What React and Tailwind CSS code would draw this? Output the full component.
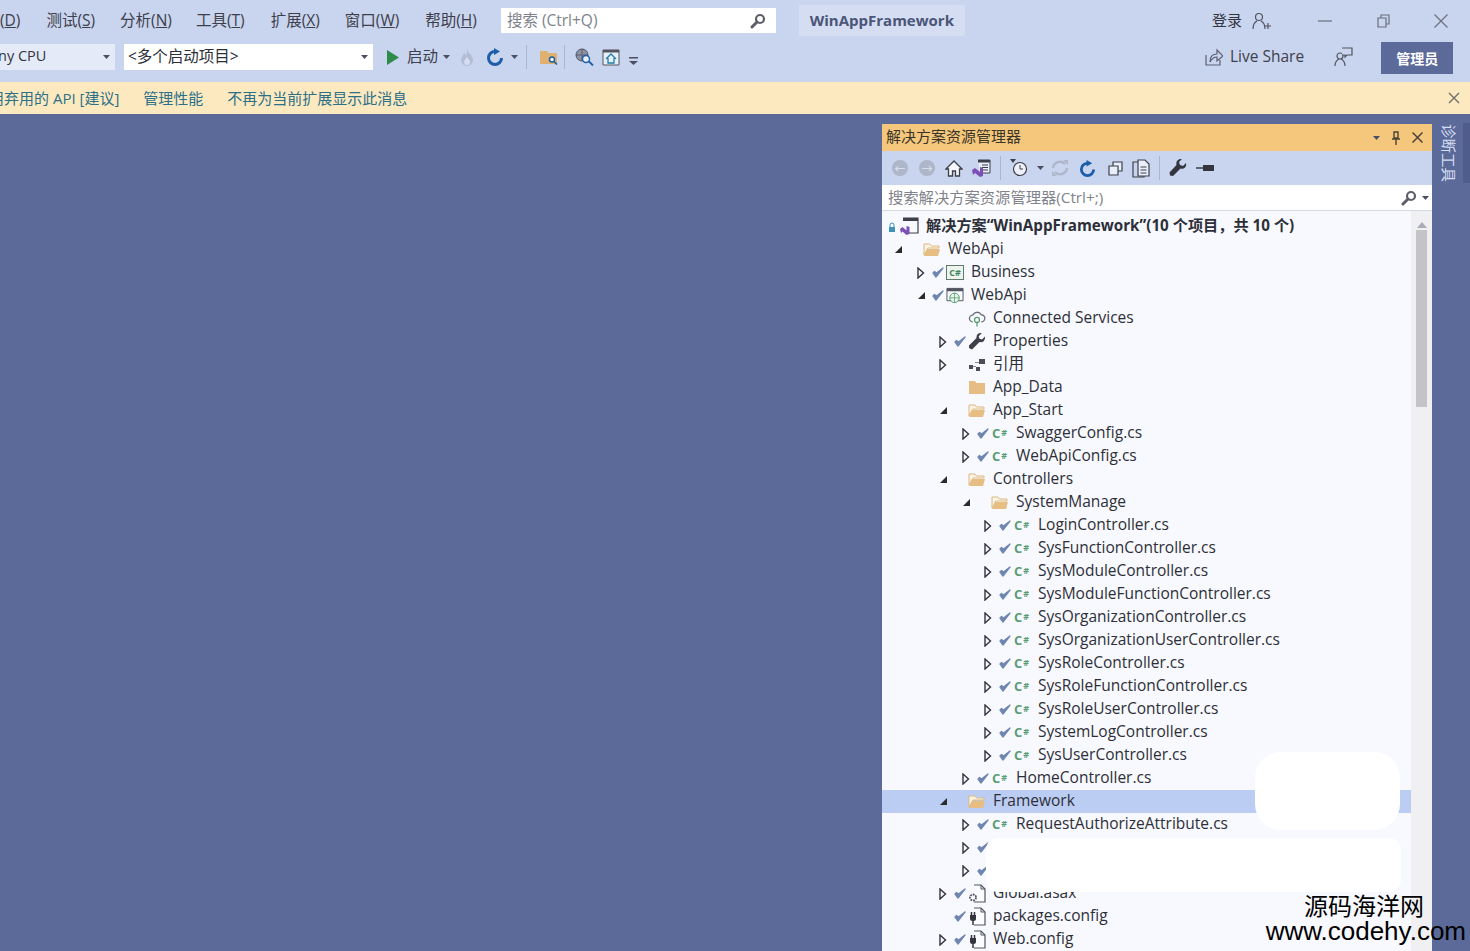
import React from "react";

const font = "font-['Open_Sans','Noto_Sans_CJK_SC',sans-serif]";

const levelPad = {
  1: "pl-[8px]",
  2: "pl-[31px]",
  3: "pl-[53px]",
  4: "pl-[76px]",
  5: "pl-[98px]",
};

const rows = [
  { level: 1, arrow: "open", icon: "folderOpen", label: "WebApi", noCheck: true },
  { level: 2, arrow: "closed", check: true, icon: "csproj", label: "Business" },
  { level: 2, arrow: "open", check: true, icon: "webproj", label: "WebApi" },
  { level: 3, icon: "cloud", label: "Connected Services" },
  { level: 3, arrow: "closed", check: true, icon: "wrench", label: "Properties" },
  { level: 3, arrow: "closed", icon: "refs", label: "引用" },
  { level: 3, icon: "folder", label: "App_Data" },
  { level: 3, arrow: "open", icon: "folderOpen", label: "App_Start" },
  { level: 4, arrow: "closed", check: true, icon: "cs", label: "SwaggerConfig.cs" },
  { level: 4, arrow: "closed", check: true, icon: "cs", label: "WebApiConfig.cs" },
  { level: 3, arrow: "open", icon: "folderOpen", label: "Controllers" },
  { level: 4, arrow: "open", icon: "folderOpen", label: "SystemManage" },
  { level: 5, arrow: "closed", check: true, icon: "cs", label: "LoginController.cs" },
  { level: 5, arrow: "closed", check: true, icon: "cs", label: "SysFunctionController.cs" },
  { level: 5, arrow: "closed", check: true, icon: "cs", label: "SysModuleController.cs" },
  { level: 5, arrow: "closed", check: true, icon: "cs", label: "SysModuleFunctionController.cs" },
  { level: 5, arrow: "closed", check: true, icon: "cs", label: "SysOrganizationController.cs" },
  { level: 5, arrow: "closed", check: true, icon: "cs", label: "SysOrganizationUserController.cs" },
  { level: 5, arrow: "closed", check: true, icon: "cs", label: "SysRoleController.cs" },
  { level: 5, arrow: "closed", check: true, icon: "cs", label: "SysRoleFunctionController.cs" },
  { level: 5, arrow: "closed", check: true, icon: "cs", label: "SysRoleUserController.cs" },
  { level: 5, arrow: "closed", check: true, icon: "cs", label: "SystemLogController.cs" },
  { level: 5, arrow: "closed", check: true, icon: "cs", label: "SysUserController.cs" },
  { level: 4, arrow: "closed", check: true, icon: "cs", label: "HomeController.cs" },
  { level: 3, arrow: "open", icon: "folderOpen", label: "Framework", selected: true },
  { level: 4, arrow: "closed", check: true, icon: "cs", label: "RequestAuthorizeAttribute.cs" },
  { level: 4, arrow: "closed", check: true, icon: "cs", label: "" },
  { level: 4, arrow: "closed", check: true, icon: "cs", label: "" },
  { level: 3, arrow: "closed", check: true, icon: "asax", label: "Global.asax" },
  { level: 3, check: true, icon: "config", label: "packages.config" },
  { level: 3, arrow: "closed", check: true, icon: "config", label: "Web.config" },
];

function Caret({ className = "" }) {
  return (
    <svg width="7" height="4" viewBox="0 0 7 4" className={className}>
      <path d="M0 0h7L3.5 4z" fill="#4a4f63" />
    </svg>
  );
}

function Arrow({ type }) {
  if (type === "open") {
    return (
      <svg width="9" height="9" viewBox="0 0 9 9">
        <path d="M8 1v7H1z" fill="#2b2b2b" />
      </svg>
    );
  }
  if (type === "closed") {
    return (
      <svg width="8" height="12" viewBox="0 0 8 12">
        <path d="M1 1l5.5 5L1 11z" fill="none" stroke="#33343c" strokeWidth="1.4" />
      </svg>
    );
  }
  return null;
}

function Check() {
  return (
    <svg width="12" height="11" viewBox="0 0 12 11">
      <path d="M1 6l3 4L11 1 4.500 6 2.500 4.500z" fill="#6f86b0" stroke="#6f86b0" strokeWidth="1.300" strokeLinejoin="round" />
    </svg>
  );
}

function DocIcon({ children }) {
  return (
    <svg width="18" height="19" viewBox="0 0 18 19">
      <path d="M6 1h7l4 4v13H6" fill="#fbfcff" stroke="#50545f" strokeWidth="1.200" />
      <path d="M13 1v4h4" fill="none" stroke="#50545f" />
      {children}
    </svg>
  );
}

function TreeIcon({ name }) {
  if (name === "folderOpen") {
    return (
      <svg width="18" height="15" viewBox="0 0 18 15">
        <path d="M1 2h6l1.5 2H16v2H5L1 13z" fill="#fbf3e4" stroke="#dcb983" />
        <path d="M1 14l3-7h13l-2 7z" fill="#e6bd82" />
      </svg>
    );
  }
  if (name === "folder") {
    return (
      <svg width="18" height="15" viewBox="0 0 18 15">
        <path d="M1 1h6l1.5 2H17v11H1z" fill="#e6bd82" />
      </svg>
    );
  }
  if (name === "cs") {
    return (
      <span className="flex w-full justify-start pl-[1px] text-[13px] leading-none font-bold text-[#5a9c74]">
        C<span className="ml-[1px] text-[9px] leading-[11px] font-bold">#</span>
      </span>
    );
  }
  if (name === "csproj") {
    return (
      <span className="flex h-[15px] w-[18px] items-center justify-center border border-[#5f7b6c] bg-[#eef3ee] text-[9px] leading-none font-bold text-[#3f8a60]">
        C#
      </span>
    );
  }
  if (name === "webproj") {
    return (
      <svg width="19" height="17" viewBox="0 0 19 17">
        <path d="M1 1h17v13H1z" fill="#f7f8fc" stroke="#50545f" />
        <path d="M1 1h17v3H1z" fill="#50545f" />
        <circle cx="9" cy="11" r="5" fill="#e8f4ea" stroke="#4f9a6c" />
        <path d="M4 11h10M9 6v10" stroke="#4f9a6c" strokeWidth="0.8" />
      </svg>
    );
  }
  if (name === "cloud") {
    return (
      <svg width="19" height="16" viewBox="0 0 19 16">
        <path d="M5 11a3.5 3.5 0 010-7 5 5 0 019-.5 3.7 3.7 0 010 7.5" fill="none" stroke="#6b7078" strokeWidth="1.4" />
        <circle cx="9.5" cy="9" r="2.6" fill="#fff" stroke="#4f9a6c" strokeWidth="1.3" />
        <path d="M9.5 11.5V16" stroke="#4f9a6c" strokeWidth="1.3" />
      </svg>
    );
  }
  if (name === "wrench") {
    return (
      <svg width="18" height="17" viewBox="0 0 18 17">
        <path d="M17 3.5l-3 3-2.500-.8-.8-2.500 3-3C11 -.5 8 1.500 8.500 5L1 12.500 1 15l3 1.500 7.500-7.500C15 9.800 17.500 7 17 3.500z" fill="#3d4048" />
      </svg>
    );
  }
  if (name === "refs") {
    return (
      <svg width="18" height="14" viewBox="0 0 18 14">
        <path d="M11 1h6v5h-6zM1 7h4v4H1zM8 9h4v4H8z" fill="#4a4d57" />
        <path d="M7 4h4v1H7zM5 8h3v1H5z" fill="#8a8d96" />
      </svg>
    );
  }
  if (name === "asax") {
    return (
      <DocIcon>
        <circle cx="5" cy="13.500" r="3" fill="#fbfcff" stroke="#50545f" strokeWidth="1.800" strokeDasharray="1.800 0.900" />
      </DocIcon>
    );
  }
  if (name === "config") {
    return (
      <DocIcon>
        <path d="M2 8v3.500a2.500 2.500 0 002.500 2.500h1a2.500 2.500 0 002.500-2.500V8z" fill="#33353f" />
        <path d="M3.500 8V5M6.500 8V5M5 14v4" stroke="#33353f" strokeWidth="1.500" />
      </DocIcon>
    );
  }
  return null;
}

function TreeRow({ row }) {
  return (
    <div
      className={`flex h-[23px] shrink-0 items-center ${levelPad[row.level]} ${
        row.selected ? "bg-[#bccdf3]" : ""
      }`}
    >
      <span className="flex w-[16px] shrink-0 items-center justify-center">
        <Arrow type={row.arrow} />
      </span>
      <span className="flex w-[17px] shrink-0 items-center justify-center">
        {row.check && <Check />}
      </span>
      <span className="flex w-[18px] shrink-0 items-center justify-center">
        <TreeIcon name={row.icon} />
      </span>
      <span className="-mt-[2px] ml-[7px] text-[15.500px] leading-[23px] whitespace-nowrap text-[#2d2f38]">
        {row.label}
      </span>
    </div>
  );
}

function MenuItem({ label, hot, className = "" }) {
  return (
    <span className={`text-[15.500px] whitespace-nowrap text-[#3d404c] ${className}`}>
      {label}(<span className="underline">{hot}</span>)
    </span>
  );
}

function SearchGlass({ color = "#5c5f69" }) {
  return (
    <svg width="16" height="16" viewBox="0 0 16 16">
      <circle cx="10" cy="6" r="4" fill="none" stroke={color} strokeWidth="2.2" />
      <path d="M7 9l-5 5" stroke={color} strokeWidth="3" strokeLinecap="round" />
    </svg>
  );
}

function Refresh({ size = 18 }) {
  return (
    <svg width={size} height={size} viewBox="0 0 18 18">
      <path d="M9 3.500A6.500 6.500 0 1 0 15.500 10" fill="none" stroke="#1c5fa8" strokeWidth="3" />
      <path d="M8 0v7l6-3.500z" fill="#1c5fa8" />
    </svg>
  );
}

function TopBar() {
  return (
    <div className="h-[82px] shrink-0 bg-[#c9d4ee]">
      <div className="flex h-[41px] items-center">
        <MenuItem label="" hot="D" />
        <MenuItem label="测试" hot="S" className="ml-[26px]" />
        <MenuItem label="分析" hot="N" className="ml-[25px]" />
        <MenuItem label="工具" hot="T" className="ml-[24px]" />
        <MenuItem label="扩展" hot="X" className="ml-[26px]" />
        <MenuItem label="窗口" hot="W" className="ml-[25px]" />
        <MenuItem label="帮助" hot="H" className="ml-[26px]" />
        <div className="ml-[24px] flex h-[25px] w-[275px] items-center justify-between bg-white pr-[10px] pl-[6px]">
          <span className="text-[15.500px] text-[#80838c]">搜索 (Ctrl+Q)</span>
          <SearchGlass />
        </div>
        <div className="ml-[23px] flex h-[31px] w-[166px] items-center justify-center bg-[#d5ddf3] text-[15px] font-bold text-[#4a5578]">
          WinAppFramework
        </div>
        <span className="ml-[247px] text-[15px] text-[#33353f]">登录</span>
        <svg width="20" height="20" viewBox="0 0 20 20" className="ml-[9px]">
          <circle cx="8" cy="6" r="3.500" fill="none" stroke="#50545f" strokeWidth="1.2" />
          <path d="M2 18c0-5 2-7 4-8M14 18c0-4-2-7-4-8M14 15h6M17 12v6" fill="none" stroke="#50545f" strokeWidth="1.2" />
        </svg>
        <svg width="14" height="2" viewBox="0 0 14 2" className="ml-[47px]">
          <path d="M0 1h14" stroke="#6b6f7b" strokeWidth="1.2" />
        </svg>
        <svg width="13" height="14" viewBox="0 0 13 14" className="ml-[45px]">
          <path d="M1 4h8v9H1zM4 4V1h8v9H9" fill="none" stroke="#6b6f7b" strokeWidth="1.2" />
        </svg>
        <svg width="14" height="14" viewBox="0 0 14 14" className="ml-[44px]">
          <path d="M0.500 0.500l13 13M13.500 0.500l-13 13" stroke="#6b6f7b" strokeWidth="1.2" />
        </svg>
      </div>
      <div className="flex h-[32px] items-center">
        <div className="flex h-[26px] w-[115px] items-center justify-between bg-[#e4eaf8] pr-[5px] pl-0">
          <span className="-mt-[2px] -ml-[2px] text-[14.500px] whitespace-nowrap text-[#33353f]">ny CPU</span>
          <Caret />
        </div>
        <div className="ml-[9px] flex h-[26px] w-[249px] items-center justify-between bg-white pr-[5px] pl-[4px]">
          <span className="text-[15.500px] text-[#2d2f38]">&lt;多个启动项目&gt;</span>
          <Caret />
        </div>
        <svg width="12" height="15" viewBox="0 0 12 15" className="ml-[14px]">
          <path d="M0 0l12 7.500L0 15z" fill="#2e8b4a" />
        </svg>
        <span className="ml-[8px] text-[15.500px] text-[#3d404c]">启动</span>
        <Caret className="ml-[5px]" />
        <svg width="14" height="18" viewBox="0 0 14 18" className="ml-[10px]">
          <path d="M7 1c1 4 6 6 6 11a6 6 0 01-12 0c0-3 2-4 3-7 1 1 2 2 2 3 1-2 1-5 1-7z" fill="#b4bdd6" />
          <path d="M7 9c1 2 3 3 3 5a3 3 0 01-6 0c0-2 2-3 3-5z" fill="#d5ddf3" />
        </svg>
        <span className="ml-[12px]">
          <Refresh />
        </span>
        <Caret className="ml-[7px]" />
        <span className="ml-[8px] h-[24px] w-px bg-[#aab4cf]" />
        <svg width="19" height="15" viewBox="0 0 19 15" className="ml-[12px]">
          <path d="M1 1h7l1.500 2H18v11H1z" fill="#e0b070" />
          <circle cx="13" cy="9.500" r="2.500" fill="#fff" stroke="#1c5fa8" strokeWidth="1.400" />
          <path d="M15 11.500l3 3" stroke="#1c5fa8" strokeWidth="1.600" />
        </svg>
        <span className="ml-[6px] h-[24px] w-px bg-[#aab4cf]" />
        <svg width="20" height="18" viewBox="0 0 20 18" className="ml-[9px]">
          <circle cx="8" cy="7" r="6" fill="#8b93a8" stroke="#50545f" />
          <path d="M2 7h12M8 1v12" stroke="#50545f" strokeWidth="0.800" />
          <circle cx="12" cy="11" r="3.500" fill="#e8eefa" stroke="#1c5fa8" strokeWidth="1.400" />
          <path d="M15 13.500l4 4" stroke="#1c5fa8" strokeWidth="1.800" />
        </svg>
        <svg width="18" height="17" viewBox="0 0 18 17" className="ml-[8px]">
          <path d="M1 1h16v15H1z" fill="#e8eefa" stroke="#50545f" />
          <path d="M1 1h16v2.500H1z" fill="#50545f" />
          <path d="M4 10l5-5 5 5M6 9v5h6V9" fill="none" stroke="#1c7fa8" strokeWidth="1.300" />
        </svg>
        <svg width="9" height="8" viewBox="0 0 9 8" className="mt-[8px] ml-[9px]">
          <path d="M0 0h9v1.400H0zM0 4h9L4.500 8z" fill="#4a4f63" />
        </svg>
        <svg width="18" height="18" viewBox="0 0 18 18" className="ml-[567px]">
          <path d="M1 7v10h14v-5" fill="none" stroke="#5c6070" strokeWidth="1.200" />
          <path d="M5 14c0-6 3-8 7-8V2l6 6-6 5V9c-3 0-5 1-7 5z" fill="none" stroke="#5c6070" strokeWidth="1.200" />
        </svg>
        <span className="ml-[7px] text-[15.500px] whitespace-nowrap text-[#3d404c]">Live Share</span>
        <svg width="19" height="20" viewBox="0 0 19 20" className="ml-[30px]">
          <circle cx="6" cy="9" r="3" fill="none" stroke="#50545f" strokeWidth="1.200" />
          <path d="M1 19c0-4 2-6 4-7M11 19c0-4-2-6-4-7" fill="none" stroke="#50545f" strokeWidth="1.200" />
          <path d="M8 1h10v7h-5l-2 2V8H8" fill="#c9d4ee" stroke="#50545f" strokeWidth="1.200" />
        </svg>
        <div className="mt-[2px] ml-[28px] flex h-[32px] w-[72px] items-center justify-center bg-[#5b6a98] text-[14px] font-bold text-white">
          管理员
        </div>
      </div>
    </div>
  );
}

function Notice() {
  return (
    <div className="flex h-[32px] shrink-0 items-center bg-[#fde9c0] text-[15px] whitespace-nowrap text-[#2b7089]">
      <span className="-ml-[26px]">调用弃用的 API [建议]</span>
      <span className="ml-[24px]">管理性能</span>
      <span className="ml-[24px]">不再为当前扩展显示此消息</span>
      <svg width="12" height="12" viewBox="0 0 12 12" className="mr-[10px] ml-auto">
        <path d="M1 1l10 10M11 1L1 11" stroke="#6f6f68" strokeWidth="1.400" />
      </svg>
    </div>
  );
}

function PanelToolbar() {
  return (
    <div className="flex h-[34px] shrink-0 items-center bg-[#c9d4ee] pl-[10px]">
      <span className="flex h-[16px] w-[16px] items-center justify-center rounded-full bg-[#aeb6c9] text-[11px] leading-none text-[#dfe5f3]">←</span>
      <span className="ml-[11px] flex h-[16px] w-[16px] items-center justify-center rounded-full bg-[#aeb6c9] text-[11px] leading-none text-[#dfe5f3]">→</span>
      <svg width="18" height="17" viewBox="0 0 18 17" className="ml-[10px]">
        <path d="M9 1L1 9h2.500v7h4v-5h3v5h4V9H17z" fill="#f5f7fc" stroke="#3d4048" strokeWidth="1.300" />
      </svg>
      <svg width="19" height="18" viewBox="0 0 19 18" className="ml-[9px]">
        <path d="M6 1h12v13H8" fill="#e8eefa" stroke="#3d4048" />
        <path d="M6 1h12v2.500H6z" fill="#3d4048" />
        <path d="M10 6h6M10 8.500h6M10 11h6" stroke="#3d4048" />
        <path d="M0 11l3-2 5 4V8l3 1v8l-3 1-5-4-2 2z" fill="#7b4fb5" />
      </svg>
      <span className="ml-[9px] h-[24px] w-px bg-[#aab4cf]" />
      <svg width="19" height="20" viewBox="0 0 19 20" className="ml-[9px]">
        <path d="M0 1h6L3 5z" fill="#3d4048" />
        <circle cx="10" cy="11" r="6.500" fill="#eef1f9" stroke="#3d4048" strokeWidth="1.200" />
        <path d="M10 7v4h3" fill="none" stroke="#3d4048" />
      </svg>
      <Caret className="ml-[8px]" />
      <svg width="18" height="18" viewBox="0 0 18 18" className="ml-[7px]">
        <path d="M2 9a7 7 0 0112-4M16 9a7 7 0 01-12 4" fill="none" stroke="#aeb6c9" strokeWidth="2.400" />
        <path d="M12 1h5v5zM6 17H1v-5z" fill="#aeb6c9" />
      </svg>
      <span className="ml-[10px]">
        <Refresh size={17} />
      </span>
      <svg width="15" height="15" viewBox="0 0 15 15" className="ml-[12px]">
        <path d="M1 5h9v9H1zM5 5V1h9v9h-4" fill="#e8eefa" stroke="#3d4048" strokeWidth="1.200" />
      </svg>
      <svg width="18" height="19" viewBox="0 0 18 19" className="ml-[9px]">
        <path d="M1 3h11v15H1z" fill="none" stroke="#3d4048" strokeWidth="1.200" />
        <path d="M6 1h7l4 4v12H6z" fill="#e8eefa" stroke="#3d4048" strokeWidth="1.200" />
        <path d="M8.500 8h6M8.500 11h6M8.500 14h6" stroke="#3d4048" />
      </svg>
      <span className="ml-[9px] h-[24px] w-px bg-[#aab4cf]" />
      <svg width="18" height="18" viewBox="0 0 18 18" className="ml-[9px]">
        <path d="M17 4l-3 3-3-1-1-3 3-3C9.500 -.5 6.500 2 7.500 6L.5 13.500 1 16.500 4 17l7.500-7.500C15 10.500 18 8 17 4z" fill="#33353f" />
      </svg>
      <svg width="18" height="6" viewBox="0 0 18 6" className="ml-[9px]">
        <path d="M0 3h7" stroke="#33353f" strokeWidth="1.400" />
        <path d="M7 0h11v6H7z" fill="#33353f" />
      </svg>
    </div>
  );
}

function SolutionExplorer() {
  return (
    <div className="flex h-[827px] w-[550px] shrink-0 flex-col overflow-hidden">
      <div className="flex h-[27px] shrink-0 items-center bg-[#f4c77d] pr-[9px] pl-[4px]">
        <span className="-mt-[2px] text-[15px] text-[#3a3528]">解决方案资源管理器</span>
        <Caret className="ml-auto" />
        <svg width="10" height="14" viewBox="0 0 10 14" className="ml-[11px]">
          <path d="M3 1h4v6H3zM1 8h8M5 8v6" fill="none" stroke="#4a4336" strokeWidth="1.400" />
        </svg>
        <svg width="11" height="11" viewBox="0 0 11 11" className="ml-[11px]">
          <path d="M.5.5l10 10M10.500.5l-10 10" stroke="#4a4336" strokeWidth="1.500" />
        </svg>
      </div>
      <PanelToolbar />
      <div className="flex h-[26px] shrink-0 items-center justify-between border-b border-[#d5d9e4] bg-white pr-[3px] pl-[6px]">
        <span className="text-[15.300px] text-[#80838c]">搜索解决方案资源管理器(Ctrl+;)</span>
        <span className="flex items-center gap-[5px]">
          <SearchGlass />
          <Caret />
        </span>
      </div>
      <div className="flex min-h-0 flex-1">
        <div className="relative min-w-0 flex-1 overflow-hidden bg-[#f8f9fe] pt-[4px]">
          <div className="flex h-[23px] items-center pl-[6px]">
            <svg width="8" height="10" viewBox="0 0 8 10">
              <path d="M2 5V3a2 2 0 014 0v2" fill="none" stroke="#3f93b5" />
              <path d="M1 5h6v5H1z" fill="#3f93b5" />
            </svg>
            <svg width="19" height="19" viewBox="0 0 19 19" className="ml-[4px]">
              <path d="M3 1h15v15H8" fill="#f8f9fe" stroke="#3d4048" strokeWidth="1.200" />
              <path d="M3 1h15v3H3z" fill="#3d4048" />
              <path d="M0 12l2.500-2 4 3.500V9l3 1v7l-3 1-4-3.500L1 16z" fill="#7b4fb5" />
            </svg>
            <span className="-mt-[2px] ml-[7px] text-[15.200px] font-bold whitespace-nowrap text-[#2d2f38]">
              解决方案“WinAppFramework”(10 个项目，共 10 个)
            </span>
          </div>
          {rows.map((row, i) => (
            <TreeRow key={i} row={row} />
          ))}
          <div className="absolute top-[541px] left-[373px] h-[78px] w-[145px] rounded-[26px] bg-white" />
          <div className="absolute top-[627px] left-[104px] h-[54px] w-[415px] rounded-[12px] bg-white" />
        </div>
        <div className="flex w-[21px] shrink-0 flex-col items-center bg-[#f0f0f3] pt-[11px]">
          <svg width="10" height="6" viewBox="0 0 10 6">
            <path d="M5 0l5 6H0z" fill="#a9acb5" />
          </svg>
          <div className="mt-[2px] h-[177px] w-[11px] bg-[#c4c4c8]" />
        </div>
      </div>
    </div>
  );
}

function DiagnosticStrip() {
  return (
    <div className="flex flex-1 items-start">
      <span className="ml-[7px] h-[60px] text-[14.500px] leading-[18px] text-[#d5ddf3] [text-orientation:sideways] [writing-mode:vertical-rl]">
        诊断工具
      </span>
      <div className="-mt-[1px] ml-auto h-[60px] w-[7px] bg-[#4f5d8c]" />
    </div>
  );
}

export default function App() {
  return (
    <div className={`relative flex h-[951px] w-[1470px] flex-col overflow-hidden bg-[#5b6a98] ${font}`}>
      <TopBar />
      <Notice />
      <div className="flex min-h-0 flex-1 pt-[10px] pl-[882px]">
        <SolutionExplorer />
        <DiagnosticStrip />
      </div>
      <div className="absolute right-[4px] bottom-[7px] flex flex-col items-end font-['Liberation_Sans','Noto_Sans_CJK_SC',sans-serif] text-black">
        <span className="mr-[42px] text-[24px] leading-[22px]">源码海洋网</span>
        <span className="text-[26px] leading-[26px]">www.codehy.com</span>
      </div>
    </div>
  );
}
